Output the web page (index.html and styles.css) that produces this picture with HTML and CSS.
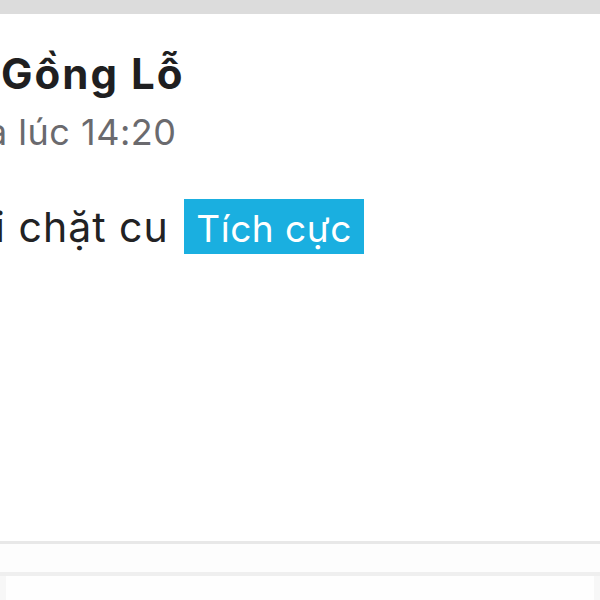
FILE: index.html
```html
<!DOCTYPE html>
<html lang="vi">
  <head>
    <meta charset="UTF-8" />
    <meta name="viewport" content="width=device-width, initial-scale=1.0" />
    <title>Bình luận</title>
    <link rel="stylesheet" href="styles.css">
  </head>
  <body>
    <div class="thanh"></div>
    <article class="binhluan">
      <h2 class="ten">Gồng Lỗ</h2>
      <p class="thoigian">a lúc 14:20</p>
      <p class="noidung">i chặt cu <span class="nhan">Tích cực</span></p>
    </article>
    <div class="khoang"></div>
    <div class="duoi"></div>
  </body>
</html>
```

FILE: styles.css
```css
body {
  margin: 0;
  height: 600px;
  overflow: hidden;
  background-color: #ffffff;
  font-family: "Inter", "Noto Sans", sans-serif;
}

.thanh {
  height: 14px;
  background-color: #dcdcdc;
}

.binhluan {
  box-sizing: border-box;
  height: 530px;
  padding-top: 35px;
  border-bottom: 3px solid #e8e8e8;
  overflow: hidden;
  white-space: nowrap;
}

.ten {
  margin: 0;
  padding-left: 1px;
  font-size: 42px;
  line-height: 50px;
  font-weight: 700;
  letter-spacing: 2px;
  color: #1f1f21;
}

.thoigian {
  margin: 11px 0 0 -13px;
  font-size: 36px;
  line-height: 44px;
  letter-spacing: 0.5px;
  color: #6a6a6e;
}

.noidung {
  margin: 45px 0 0 -5px;
  font-size: 41px;
  line-height: 55px;
  letter-spacing: 1px;
  color: #222224;
}

.nhan {
  display: inline-block;
  margin-left: 3px;
  padding: 4px 12px 0;
  font-size: 37px;
  line-height: 51px;
  letter-spacing: 0.5px;
  background-color: #1aafe0;
  color: #ffffff;
}

.khoang {
  height: 28px;
  background-color: #fdfdfd;
  border-bottom: 4px solid #efefef;
}

.duoi {
  height: 24px;
  border-left: 6px solid #f7f7f7;
  border-right: 6px solid #f7f7f7;
  background-color: #fefefe;
}
```
